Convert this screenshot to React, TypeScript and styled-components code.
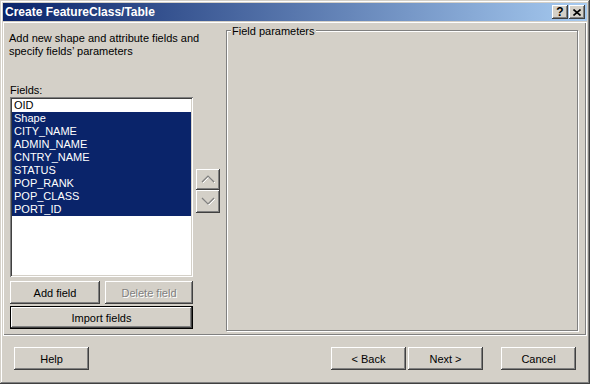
import styled, { createGlobalStyle } from 'styled-components';

const GlobalStyle = createGlobalStyle`
  html, body {
    margin: 0;
    padding: 0;
    background: #d4d0c8;
  }
  body {
    font-family: "Liberation Sans", Arial, sans-serif;
    font-size: 11px;
  }
`;

const Window = styled.div`
  width: 590px;
  height: 384px;
  box-sizing: border-box;
  padding: 3px;
  background: #d4d0c8;
  display: flex;
  flex-direction: column;
  box-shadow: inset -1px -1px 0 #404040, inset 1px 1px 0 #d4d0c8,
    inset -2px -2px 0 #808080, inset 2px 2px 0 #ffffff;
`;

const TitleBar = styled.div`
  height: 18px;
  margin-bottom: 1px;
  display: flex;
  align-items: center;
  padding: 0 2px;
  background: linear-gradient(to right, #0a246a, #a6caf0);
`;

const Title = styled.div`
  flex: 1;
  color: #fff;
  font-weight: bold;
  font-size: 12px;
`;

const CaptionButton = styled.div<{ $gap?: number }>`
  width: 16px;
  height: 14px;
  margin-left: ${({ $gap }) => $gap ?? 0}px;
  box-sizing: border-box;
  background: #d4d0c8;
  display: flex;
  align-items: center;
  justify-content: center;
  font-weight: bold;
  font-size: 12px;
  color: #000;
  box-shadow: inset -1px -1px 0 #404040, inset 1px 1px 0 #ffffff,
    inset -2px -2px 0 #808080;
`;

const Body = styled.div`
  height: 314px;
  box-sizing: border-box;
  display: flex;
  gap: 6px;
  padding: 8px 9px 3px 7px;
  box-shadow: inset 1px 1px 0 #ffffff, inset -1px -1px 0 #ffffff,
    inset -2px -2px 0 #808080;
`;

const LeftCol = styled.div`
  width: 210px;
  margin-top: 1px;
  display: flex;
  flex-direction: column;
`;

const Intro = styled.div`
  line-height: 13px;
  margin-left: -1px;
  margin-top: 1px;
`;

const Label = styled.div`
  margin-top: 26px;
  line-height: 13px;
`;

const ListRow = styled.div`
  display: flex;
  gap: 3px;
`;

const ListBox = styled.div`
  width: 183px;
  height: 180px;
  box-sizing: border-box;
  padding: 2px;
  background: #fff;
  box-shadow: inset 1px 1px 0 #808080, inset -1px -1px 0 #ffffff,
    inset 2px 2px 0 #404040, inset -2px -2px 0 #d4d0c8;
`;

const ListItem = styled.div<{ $selected?: boolean }>`
  height: 13px;
  line-height: 13px;
  padding-left: 2px;
  background: ${({ $selected }) => ($selected ? '#0a246a' : 'transparent')};
  color: ${({ $selected }) => ($selected ? '#fff' : '#000')};
`;

const ArrowCol = styled.div`
  margin-top: 72px;
  display: flex;
  flex-direction: column;
`;

const ArrowButton = styled.div<{ $h: number }>`
  width: 24px;
  height: ${({ $h }) => $h}px;
  box-sizing: border-box;
  background: #d4d0c8;
  display: flex;
  box-shadow: inset -1px -1px 0 #404040, inset 1px 1px 0 #ffffff,
    inset -2px -2px 0 #808080;
`;

const ButtonRow = styled.div`
  display: flex;
  gap: 5px;
  margin-top: 4px;
  width: 183px;
`;

const Button = styled.div<{ $w: number; $disabled?: boolean; $default?: boolean }>`
  width: ${({ $w }) => $w}px;
  height: 23px;
  box-sizing: border-box;
  background: #d4d0c8;
  display: flex;
  align-items: center;
  justify-content: center;
  color: ${({ $disabled }) => ($disabled ? '#808080' : '#000')};
  text-shadow: ${({ $disabled }) => ($disabled ? '1px 1px 0 #ffffff' : 'none')};
  border: ${({ $default }) => ($default ? '1px solid #000' : 'none')};
  box-shadow: inset -1px -1px 0 #404040, inset 1px 1px 0 #ffffff,
    inset -2px -2px 0 #808080;
`;

const ImportRow = styled.div`
  margin-top: 2px;
`;

const Group = styled.div`
  flex: 1;
  position: relative;
  box-sizing: border-box;
  border: 1px solid #808080;
  box-shadow: inset 1px 1px 0 #ffffff, 1px 1px 0 #ffffff;
  height: 301px;
`;

const GroupLabel = styled.div`
  position: absolute;
  top: -6px;
  left: 4px;
  padding: 0 1px;
  line-height: 13px;
  background: #d4d0c8;
`;

const Footer = styled.div`
  flex: 1;
  display: flex;
  align-items: flex-start;
  padding: 11px 11px 0 11px;
  gap: 2px;
`;

const Spacer = styled.div`
  flex: 1;
`;

const Gap = styled.div`
  width: 14px;
`;

const fields = [
  'OID',
  'Shape',
  'CITY_NAME',
  'ADMIN_NAME',
  'CNTRY_NAME',
  'STATUS',
  'POP_RANK',
  'POP_CLASS',
  'PORT_ID',
];

const Chevron = ({ up, h }: { up: boolean; h: number }) => {
  const pts = up ? '6,13 12,7 18,13' : '6,8 12,14 18,8';
  return (
    <svg width="24" height={h} viewBox={`0 0 24 ${h}`}>
      <polyline points={pts} fill="none" stroke="#ffffff" strokeWidth="1" transform="translate(1,1)" />
      <polyline points={pts} fill="none" stroke="#808080" strokeWidth="1.2" />
    </svg>
  );
};

const App = () => {
  return (
    <>
      <GlobalStyle />
      <Window>
        <TitleBar>
          <Title>Create FeatureClass/Table</Title>
          <CaptionButton>?</CaptionButton>
          <CaptionButton $gap={1}>
            <svg width="8" height="7" viewBox="0 0 8 7">
              <path d="M0.5 0.5 L7.5 6.5 M7.5 0.5 L0.5 6.5" stroke="#000" strokeWidth="1.6" />
            </svg>
          </CaptionButton>
        </TitleBar>
        <Body>
          <LeftCol>
            <Intro>
              Add new shape and attribute fields and
              <br />
              specify fields’ parameters
            </Intro>
            <Label>Fields:</Label>
            <ListRow>
              <ListBox>
                {fields.map((f, i) => (
                  <ListItem key={f} $selected={i > 0}>
                    {f}
                  </ListItem>
                ))}
              </ListBox>
              <ArrowCol>
                <ArrowButton $h={21}>
                  <Chevron up h={21} />
                </ArrowButton>
                <ArrowButton $h={23}>
                  <Chevron up={false} h={23} />
                </ArrowButton>
              </ArrowCol>
            </ListRow>
            <ButtonRow>
              <Button $w={90}>Add field</Button>
              <Button $w={88} $disabled>
                Delete field
              </Button>
            </ButtonRow>
            <ImportRow>
              <Button $w={183} $default>
                Import fields
              </Button>
            </ImportRow>
          </LeftCol>
          <Group>
            <GroupLabel>Field parameters</GroupLabel>
          </Group>
        </Body>
        <Footer>
          <Button $w={75}>Help</Button>
          <Spacer />
          <Button $w={75}>&lt; Back</Button>
          <Button $w={75}>Next &gt;</Button>
          <Gap />
          <Button $w={75}>Cancel</Button>
        </Footer>
      </Window>
    </>
  );
};

export default App;
